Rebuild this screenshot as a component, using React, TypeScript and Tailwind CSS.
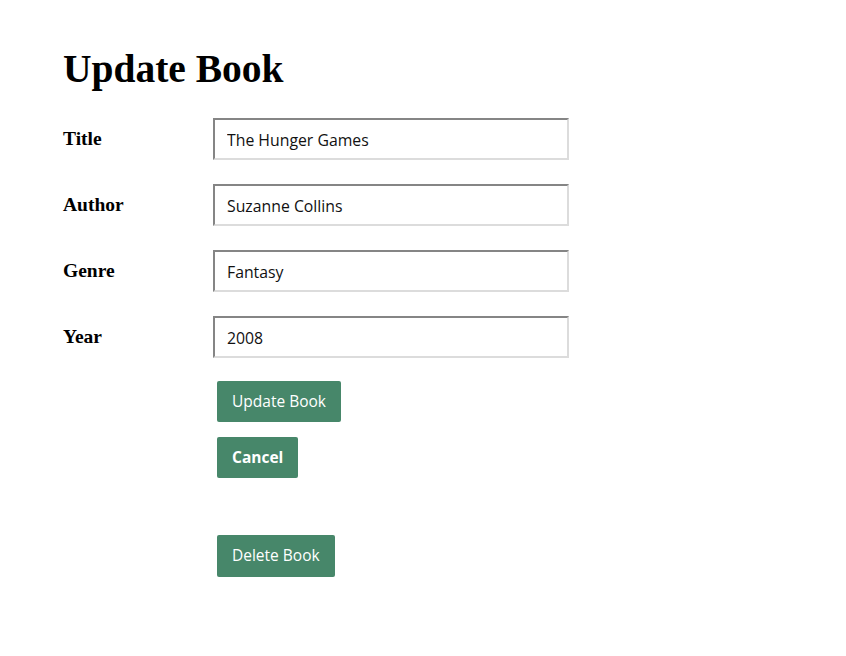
import { useState } from 'react';

const fields = [
  { key: 'title', label: 'Title', value: 'The Hunger Games' },
  { key: 'author', label: 'Author', value: 'Suzanne Collins' },
  { key: 'genre', label: 'Genre', value: 'Fantasy' },
  { key: 'year', label: 'Year', value: '2008' },
];

export default function App() {
  const [book, setBook] = useState<Record<string, string>>(
    Object.fromEntries(fields.map((f) => [f.key, f.value]))
  );

  return (
    <div className="min-h-[656px] bg-white pl-[63px] pt-[45px] text-black font-['Liberation_Serif',serif]">
      <h1 className="text-[39.5px] font-bold leading-[48px] mb-[25px]">Update Book</h1>

      {/* Form rows */}
      <div className="flex flex-col gap-[24px]">
        {fields.map((f) => (
          <div key={f.key} className="flex items-center">
            <label className="w-[150px] text-[19.5px] font-bold">{f.label}</label>
            <input
              value={book[f.key]}
              onChange={(e) => setBook({ ...book, [f.key]: e.target.value })}
              className="w-[356px] h-[42px] px-[12px] pt-[1px] text-[15.8px] font-['Open_Sans',sans-serif] text-[#111] border-2 border-t-[#858585] border-l-[#858585] border-b-[#dcdcdc] border-r-[#dcdcdc] outline-none"
            />
          </div>
        ))}
      </div>

      {/* Actions */}
      <div className="ml-[154px] mt-[23px] flex flex-col items-start font-['Open_Sans',sans-serif] text-[15.5px] text-white">
        <button className="h-[41px] px-[15px] bg-[#47876a] rounded-[2px]">Update Book</button>
        <button className="mt-[15px] h-[41px] px-[15px] bg-[#47876a] rounded-[2px] font-bold">Cancel</button>
        <button className="mt-[57px] h-[42px] px-[15px] bg-[#47876a] rounded-[2px]">Delete Book</button>
      </div>
    </div>
  );
}
